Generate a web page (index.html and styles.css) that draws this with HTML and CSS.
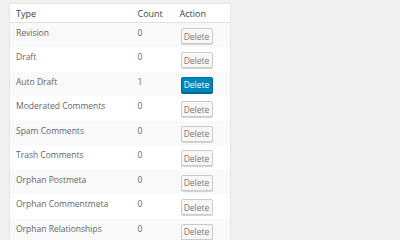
FILE: index.html
```html
<!DOCTYPE html>
<html lang="en">
<head>
  <meta charset="UTF-8">
  <meta name="viewport" content="width=device-width, initial-scale=1.0">
  <title>Clean Up</title>
  <link rel="stylesheet" href="styles.css">
</head>
<body>
  <!-- Cleanup table -->
  <table class="cleanup-table">
    <thead>
      <tr>
        <th class="col-type">Type</th>
        <th class="col-count">Count</th>
        <th class="col-action">Action</th>
      </tr>
    </thead>
    <tbody>
      <tr class="alt"><td>Revision</td><td>0</td><td><button class="btn">Delete</button></td></tr>
      <tr><td>Draft</td><td>0</td><td><button class="btn">Delete</button></td></tr>
      <tr class="alt"><td>Auto Draft</td><td>1</td><td><button class="btn btn-primary">Delete</button></td></tr>
      <tr><td>Moderated Comments</td><td>0</td><td><button class="btn">Delete</button></td></tr>
      <tr class="alt"><td>Spam Comments</td><td>0</td><td><button class="btn">Delete</button></td></tr>
      <tr><td>Trash Comments</td><td>0</td><td><button class="btn">Delete</button></td></tr>
      <tr class="alt"><td>Orphan Postmeta</td><td>0</td><td><button class="btn">Delete</button></td></tr>
      <tr><td>Orphan Commentmeta</td><td>0</td><td><button class="btn">Delete</button></td></tr>
      <tr class="alt"><td>Orphan Relationships</td><td>0</td><td><button class="btn">Delete</button></td></tr>
    </tbody>
  </table>
</body>
</html>
```

FILE: styles.css
```css
* {
  margin: 0;
  padding: 0;
  box-sizing: border-box;
}

body {
  background: #f1f1f1;
  font-family: 'Open Sans', sans-serif;
  color: #666;
  padding: 3px 0 0 9px;
}

.cleanup-table {
  width: 222px;
  border-collapse: collapse;
  background: #fff;
  border: 1px solid #e5e5e5;
  box-shadow: 0 1px 1px rgba(0, 0, 0, 0.04);
  font-size: 8.5px;
}

.cleanup-table th {
  height: 19px;
  text-align: left;
  font-weight: 400;
  font-size: 9px;
  color: #444;
  border-bottom: 1px solid #e1e1e1;
  vertical-align: middle;
}

.cleanup-table td {
  height: 24.5px;
  vertical-align: top;
  padding-top: 4px;
  line-height: 12px;
}

.cleanup-table td:last-child {
  padding-top: 5px;
}

.col-type,
.cleanup-table td:first-child {
  padding-left: 6px;
  width: 128px;
}

.col-count {
  width: 42px;
}

.cleanup-table tr.alt td {
  background: #f9f9f9;
}

.btn {
  display: block;
  font-family: inherit;
  font-size: 8.5px;
  color: #777;
  background: #f7f7f7;
  border: 1px solid #ccc;
  border-radius: 2px;
  box-shadow: 0 1px 0 #d5d5d5;
  width: 32px;
  height: 16px;
  margin-left: 1px;
  cursor: pointer;
}

.btn-primary {
  background: #0085ba;
  border-color: #0073aa #006799 #006799;
  box-shadow: 0 1px 0 #006799;
  color: #fff;
}
```
